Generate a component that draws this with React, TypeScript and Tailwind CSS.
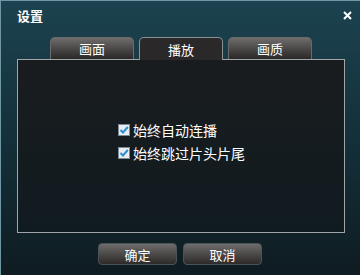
import React from "react";

const font = { fontFamily: '"Noto Sans CJK SC", "Noto Sans", sans-serif' };

function Check() {
  return (
    <span className="w-[12px] h-[12px] bg-[#e8ecef] border border-[#7a8a94] flex items-center justify-center">
      <svg width="10" height="10" viewBox="0 0 10 10">
        <path d="M1.5 5 L4 7.5 L8.8 2" stroke="#2a8fd0" strokeWidth="2" fill="none" />
      </svg>
    </span>
  );
}

export default function App() {
  const tab = "w-[84px] h-[22px] rounded-t-[5px] flex items-center justify-center text-white text-[13px] leading-none";
  const btn = "w-[79px] h-[22px] rounded-[4px] border border-[#4a5458] bg-gradient-to-b from-[#6e6c6c] to-[#2e2a2a] flex items-center justify-center text-white text-[13px] leading-none";
  return (
    <div style={font} className="w-[360px] h-[275px] border-t border-l border-[#6f98a4] bg-gradient-to-b from-[#1c4350] via-[#14303a] to-[#0f1c22] flex flex-col overflow-hidden">
      <div className="h-[27px] flex items-center justify-between pl-[16px] pr-[8px]">
        <span className="text-white text-[13px] font-bold leading-none mt-[2px]">设置</span>
        <svg width="9" height="9" viewBox="0 0 9 9" className="mt-[2px]">
          <path d="M1 1 L8 8 M8 1 L1 8" stroke="#fff" strokeWidth="2" />
        </svg>
      </div>
      <div className="flex items-end gap-[5px] ml-[49px] mt-[8px] h-[23px]">
        <div className={tab + " border border-b-0 border-[#6a6a6a] bg-gradient-to-b from-[#6e6c6c] to-[#2c2828]"}>画面</div>
        <div className={tab + " h-[23px] border border-b-0 border-[#8a9094] bg-[#2a2828] relative z-10 -mb-px"}>播放</div>
        <div className={tab + " border border-b-0 border-[#6a6a6a] bg-gradient-to-b from-[#6e6c6c] to-[#2c2828]"}>画质</div>
      </div>
      <div className="ml-[16px] w-[328px] h-[174px] border border-[#a0a6a8] bg-gradient-to-b from-[#191c1e] to-[#101b20] flex flex-col pl-[100px] pt-[63px] gap-[9px]">
        <div className="flex items-center gap-[3px] text-white text-[14px] leading-none">
          <Check />
          <span>始终自动连播</span>
        </div>
        <div className="flex items-center gap-[3px] text-white text-[14px] leading-none">
          <Check />
          <span>始终跳过片头片尾</span>
        </div>
      </div>
      <div className="flex gap-[6px] ml-[97px] mt-[10px]">
        <div className={btn}>确定</div>
        <div className={btn}>取消</div>
      </div>
    </div>
  );
}
